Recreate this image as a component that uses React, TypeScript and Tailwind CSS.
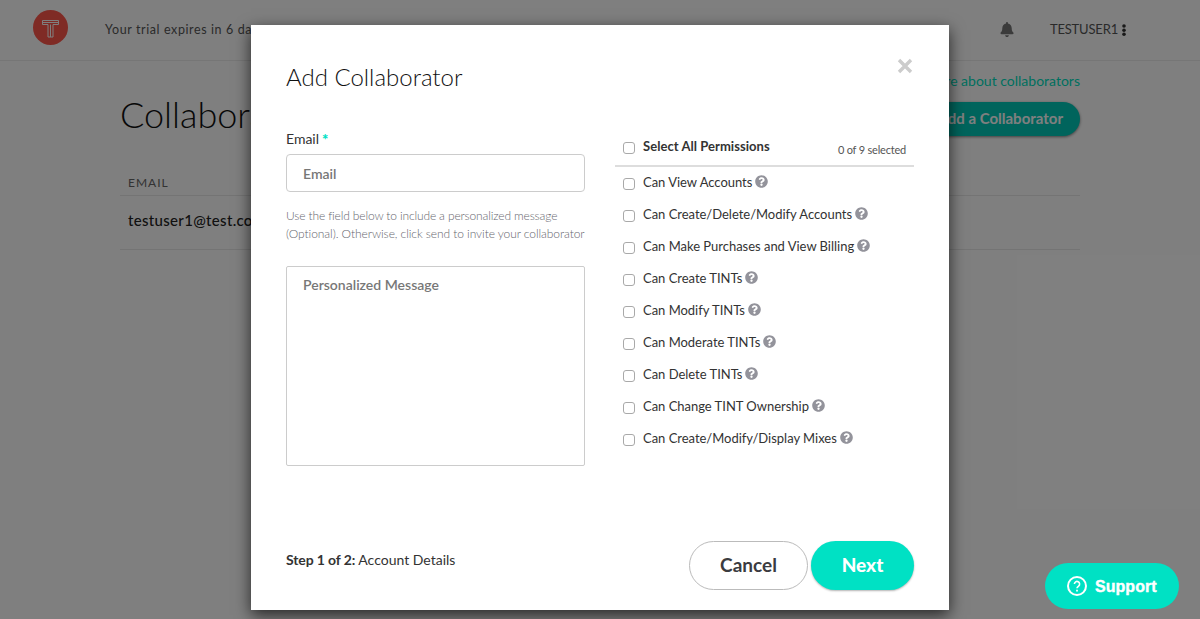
import { FaBell, FaQuestionCircle } from "react-icons/fa";

const permissions = [
  "Can View Accounts",
  "Can Create/Delete/Modify Accounts",
  "Can Make Purchases and View Billing",
  "Can Create TINTs",
  "Can Modify TINTs",
  "Can Moderate TINTs",
  "Can Delete TINTs",
  "Can Change TINT Ownership",
  "Can Create/Modify/Display Mixes",
];

function Logo() {
  return (
    <svg viewBox="0 0 36 36" className="size-9">
      <circle cx="18.5" cy="18.5" r="17.5" fill="#ff564a" />
      <g fill="none" stroke="#fff" strokeWidth="1">
        <path d="M10.500 11.500h16v4h-5.500v12.500h-5V15.500h-5.500z" />
        <path d="M10.500 13.500h16M18.500 15.500V28" />
      </g>
    </svg>
  );
}

function Checkbox() {
  return (
    <input
      type="checkbox"
      className="block size-3 shrink-0 appearance-none rounded-[3px] border border-[#a9a9a9] bg-white"
    />
  );
}

function Page() {
  return (
    <div className="h-full bg-white">
      <header className="flex h-[61px] items-center border-b border-[#ececec] pl-8">
        <div className="flex h-full w-[73px] items-start pt-[9px]">
          <Logo />
        </div>
        <span className="grow text-[12.5px] tracking-[0.600px] text-[#555]">Your trial expires in 6 days</span>
        <FaBell className="mr-9 mb-0.5 h-[15px] w-[14px] text-[#777]" />
        <span className="text-[13px] tracking-[-0.180px] text-[#555]">TESTUSER1</span>
        <svg viewBox="0 0 4 12" className="mr-[74px] ml-1 h-3 w-1" fill="#333">
          <circle cx="2" cy="2" r="1.800" />
          <circle cx="2" cy="6.200" r="1.800" />
          <circle cx="2" cy="10.200" r="1.800" />
        </svg>
      </header>
      <main className="mx-auto w-[960px]">
        <div className="flex h-[112px] justify-between">
          <h1 className="pt-[30px] text-[36px] leading-[46px] font-light text-[#111]">Collaborators</h1>
          <div className="flex flex-col items-end pt-[10px]">
            <a className="text-[14px] leading-5 text-[#00dfc0]">Learn more about collaborators</a>
            <button className="mt-[11px] h-[34px] rounded-full bg-[#00c9b9] px-[17px] pb-0.5 text-[15px] font-bold text-white shadow-[0_1px_3px_rgba(0,0,0,0.5)]">
              Add a Collaborator
            </button>
          </div>
        </div>
        <div className="h-[23px] border-b border-[#e8e8e8] pl-2 text-[12px] leading-[20px] tracking-[1px] text-[#666]">
          EMAIL
        </div>
        <div className="h-[54px] border-b border-[#e8e8e8] pl-2 text-[15px] leading-[48px] font-medium tracking-[0.320px] text-[#222]">
          testuser1@test.com
        </div>
      </main>
    </div>
  );
}

function DetailsForm() {
  return (
    <div className="flex w-[299px] flex-col">
      <label className="flex h-5 gap-[3px] text-[14px] leading-5 text-[#333]">
        Email <span className="text-[15px] font-black text-[#00e1c4]">*</span>
      </label>
      <input
        placeholder="Email"
        className="mt-[5px] h-[38px] rounded-[4px] border border-[#ccc] px-4 pt-px text-[14px] font-semibold placeholder:text-[#777]"
      />
      <p className="mt-[15px] text-[12px] leading-[18px] font-light tracking-[-0.070px] whitespace-nowrap text-[#66666e]">
        <span className="tracking-[-0.140px]">Use the field below to include a personalized message</span>
        <br />
        (Optional). Otherwise, click send to invite your collaborator
      </p>
      <textarea
        placeholder="Personalized Message"
        className="mt-[23px] h-[200px] resize-none rounded-[2px] border border-[#ccc] px-4 py-2 text-[14px] leading-5 font-semibold placeholder:text-[#777]"
      />
    </div>
  );
}

function Permissions() {
  return (
    <div className="w-[299px] text-[13px] text-[#333]">
      <div className="flex h-[38px] items-start border-b-2 border-[#ddd] pr-2 pl-2">
        <div className="pt-[13px]">
          <Checkbox />
        </div>
        <span className="grow pt-[7px] pl-2 leading-5 font-bold tracking-[0.050px]">Select All Permissions</span>
        <span className="pt-[11px] text-[11px] leading-5 tracking-[-0.200px] text-[#555]">0 of 9 selected</span>
      </div>
      <div className="-mt-px">
        {permissions.map((name) => (
          <label key={name} className="flex h-8 items-center pl-2">
            <span className="pt-[3px]">
              <Checkbox />
            </span>
            <span className="pl-2 leading-5 tracking-[-0.020px]">{name}</span>
            <FaQuestionCircle className="mb-px ml-[3px] size-[13px] text-[#93939b]" />
          </label>
        ))}
      </div>
    </div>
  );
}

function Modal() {
  return (
    <section className="flex h-[585px] w-[698px] flex-col bg-white px-[35px] shadow-[0_5px_15px_rgba(0,0,0,0.7)]">
      <div className="flex h-[104px] justify-between">
        <h2 className="pt-[36px] text-[24px] leading-[32px] font-light text-[#111]">Add Collaborator</h2>
        <svg viewBox="0 0 16 16" className="mt-[33px] mr-px size-4" stroke="#ccc" strokeWidth="3.400">
          <path d="M2 2l12 12M14 2L2 14" />
        </svg>
      </div>
      <div className="flex gap-[30px]">
        <DetailsForm />
        <Permissions />
      </div>
      <footer className="mt-auto mb-5 flex h-[49px] items-center">
        <p className="grow pb-[11px] text-[14px] leading-5 text-[#333]">
          <b className="tracking-[-0.120px]">Step 1 of 2:</b> Account Details
        </p>
        <button className="h-[49px] w-[119px] rounded-full border border-[#bbb] text-[19px] font-bold text-[#3b3b40]">
          Cancel
        </button>
        <button className="ml-[3px] h-[49px] w-[103px] rounded-full bg-[#00e1c4] text-[19px] font-black text-white shadow-[0_1px_2px_rgba(0,0,0,0.3)]">
          Next
        </button>
      </footer>
    </section>
  );
}

export default function App() {
  return (
    <div className="relative h-[619px] w-[1200px] overflow-hidden font-['Lato',sans-serif]">
      <Page />
      <div className="absolute inset-0 flex items-start justify-center bg-black/50 pt-[25px]">
        <Modal />
      </div>
      <button className="absolute right-[21px] bottom-[10px] flex h-[46px] w-[134px] items-center rounded-full bg-[#00e1c4] pl-[22px] font-['Liberation_Sans',sans-serif] text-[16px] font-bold text-white">
        <svg viewBox="0 0 20 20" className="size-5" fill="none" stroke="#fff" strokeWidth="2">
          <circle cx="10" cy="10" r="9" />
          <path d="M7.400 8a2.600 2.600 0 1 1 4.200 2.100c-.9.700-1.600 1.100-1.600 2.200" strokeWidth="1.600" />
          <path d="M10 13.700v1.800" strokeWidth="1.800" />
        </svg>
        <span className="ml-2 pt-0.5 tracking-[0.050px] [-webkit-text-stroke:0.4px_white]">Support</span>
      </button>
    </div>
  );
}
